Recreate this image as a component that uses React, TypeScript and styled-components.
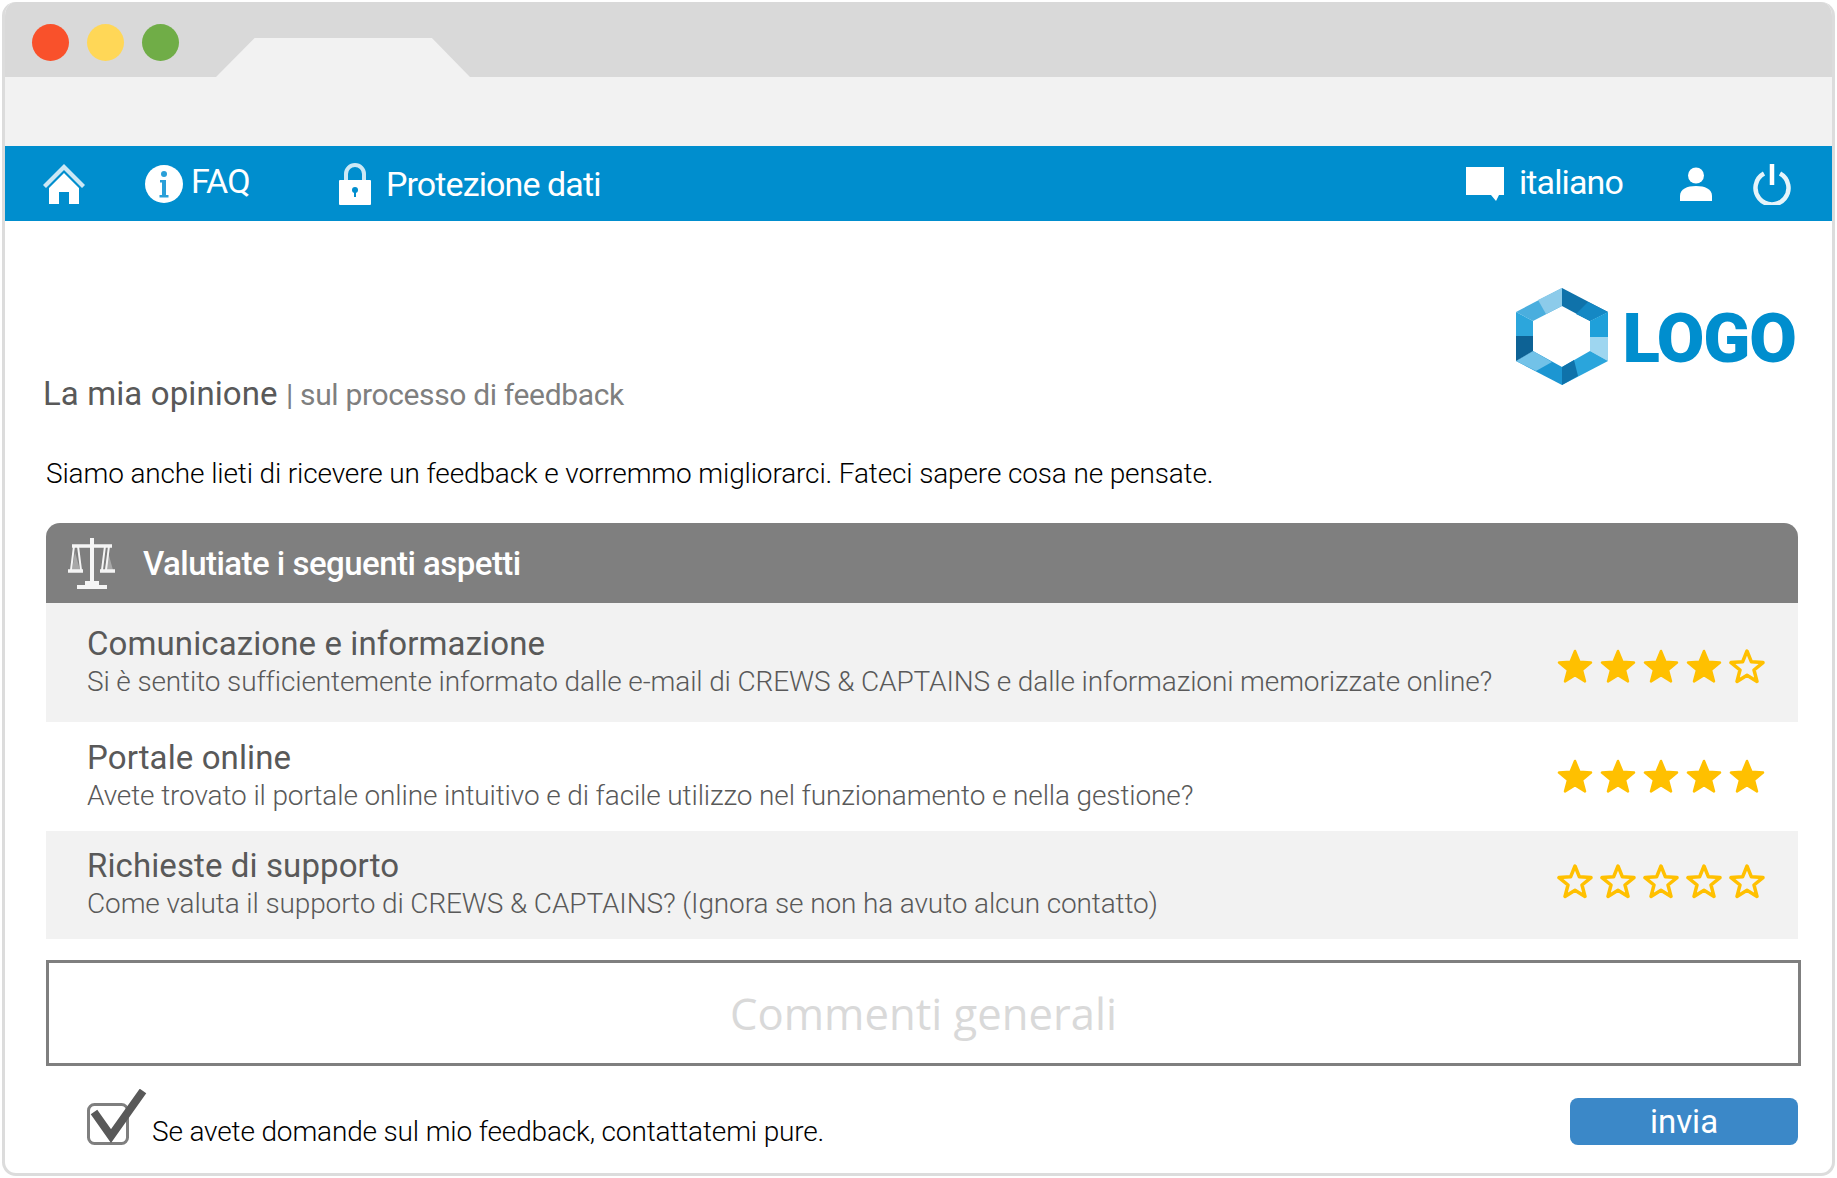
import React from "react";
import styled, { createGlobalStyle } from "styled-components";

const GlobalStyle = createGlobalStyle`
  html, body {
    margin: 0;
    padding: 0;
    background: #ffffff;
  }
  body {
    font-family: Roboto, "Liberation Sans", sans-serif;
    color: #000000;
  }
  * {
    box-sizing: border-box;
  }
`;

// WINDOW
const Page = styled.div`
  width: 1837px;
  height: 1178px;
  padding: 2px;
`;
const Window = styled.div`
  width: 1833px;
  height: 1174px;
  border: 3px solid #dcdcdc;
  border-top-width: 0;
  border-radius: 14px;
  overflow: hidden;
  display: flex;
  flex-direction: column;
  background: #ffffff;
`;
const TitleBar = styled.div`
  height: 75px;
  flex: none;
  background: #d9d9d9;
  display: flex;
  padding-top: 22px;
  padding-left: 27px;
  gap: 18px;
  position: relative;
`;
const Dot = styled.span<{ $color: string }>`
  width: 37px;
  height: 37px;
  border-radius: 50%;
  background: ${(p) => p.$color};
`;
const Tab = styled.div`
  position: absolute;
  left: 211px;
  bottom: 0;
  width: 254px;
  height: 39px;
  background: #f2f2f2;
  clip-path: polygon(15.2% 0, 85% 0, 100% 100%, 0 100%);
`;
const AddressBar = styled.div`
  height: 69px;
  flex: none;
  background: #f2f2f2;
`;

// NAV
const Nav = styled.nav`
  height: 75px;
  flex: none;
  background: #008ece;
  display: flex;
  align-items: center;
  color: #ffffff;
  padding-left: 38px;
  padding-right: 41px;
  svg {
    filter: blur(0.5px);
  }
`;
const NavItem = styled.div<{ $width?: number }>`
  display: flex;
  align-items: center;
  flex: none;
  width: ${(p) => (p.$width ? `${p.$width}px` : "auto")};
`;
const NavLabel = styled.span<{ $gap: number; $raise?: number }>`
  margin-left: ${(p) => p.$gap}px;
  margin-bottom: ${(p) => p.$raise ?? 0}px;
  font-size: 34px;
  letter-spacing: -0.9px;
  line-height: 40px;
`;
const NavSpacer = styled.div`
  flex: 1;
`;

// CONTENT
const Content = styled.main`
  flex: 1;
  padding: 0 34px 0 41px;
  display: flex;
  flex-direction: column;
  min-height: 0;
`;
const Brand = styled.div`
  display: flex;
  justify-content: space-between;
  align-items: flex-end;
  height: 214px;
  padding-right: 2px;
`;
const Heading = styled.h1`
  margin: 0 0 0 -3px;
  font-size: 33px;
  font-weight: 400;
  color: #595959;
  line-height: 40px;
  letter-spacing: 0.1px;
  padding-bottom: 20px;
`;
const HeadingNote = styled.span`
  font-size: 30px;
  color: #7f7f7f;
  letter-spacing: -0.35px;
`;
const Logo = styled.div`
  display: flex;
  align-items: center;
  gap: 14px;
  margin-bottom: 50px;
  svg {
    filter: blur(0.4px);
  }
`;
const LogoText = styled.span`
  font-family: Roboto, "Liberation Sans", sans-serif;
  font-size: 69px;
  font-weight: 900;
  line-height: 70px;
  margin-top: 4px;
  color: #008ece;
  letter-spacing: -1px;
`;
const Intro = styled.p`
  margin: 19px 0 29px;
  font-size: 28px;
  font-weight: 300;
  line-height: 40px;
  letter-spacing: -0.135px;
  color: #000000;
`;

// RATINGS
const Panel = styled.section`
  display: flex;
  flex-direction: column;
`;
const PanelHeader = styled.div`
  height: 80px;
  background: #7f7f7f;
  border-radius: 14px 14px 0 0;
  display: flex;
  align-items: center;
  padding-left: 22px;
  color: #ffffff;
  svg {
    filter: blur(0.5px);
  }
`;
const PanelTitle = styled.h2`
  margin: 0 0 0 28px;
  font-size: 33px;
  font-weight: 500;
  letter-spacing: -0.53px;
`;
const Row = styled.div<{ $shaded: boolean; $height: number }>`
  height: ${(p) => p.$height}px;
  background: ${(p) => (p.$shaded ? "#f2f2f2" : "#ffffff")};
  display: flex;
  align-items: center;
  justify-content: space-between;
  padding: 0 33px 0 41px;
`;
const RowText = styled.div`
  display: flex;
  flex-direction: column;
`;
const RowTitle = styled.h3`
  margin: 0;
  font-size: 33px;
  font-weight: 400;
  line-height: 38px;
  letter-spacing: 0.1px;
  color: #595959;
`;
const RowQuestion = styled.p`
  margin: 0;
  font-size: 28px;
  font-weight: 300;
  line-height: 38px;
  letter-spacing: -0.12px;
  color: #595959;
`;
const Stars = styled.div<{ $drop: number }>`
  display: flex;
  gap: 7px;
  margin-top: ${(p) => Math.max(p.$drop, 0)}px;
  margin-bottom: ${(p) => Math.max(-p.$drop, 0)}px;
`;

// FORM
const Comments = styled.div`
  height: 106px;
  margin-top: 21px;
  margin-right: -3px;
  border: 3px solid #7f7f7f;
  display: flex;
  align-items: center;
  justify-content: center;
  font-family: "Open Sans", "Noto Sans", sans-serif;
  font-size: 43.6px;
  color: #d9d9d9;
`;
const Footer = styled.div`
  display: flex;
  align-items: flex-start;
  justify-content: space-between;
  margin-top: 23px;
  padding-left: 41px;
`;
const Consent = styled.label`
  display: flex;
  align-items: flex-end;
  gap: 5px;
  font-size: 28px;
  font-weight: 300;
  line-height: 36px;
  letter-spacing: -0.15px;
  color: #000000;
  svg {
    margin-bottom: 5px;
    filter: blur(0.4px);
  }
`;
const SendButton = styled.button`
  width: 228px;
  height: 47px;
  margin-top: 9px;
  border: 0;
  border-radius: 8px;
  background: #3b88c8;
  color: #ffffff;
  font-family: Roboto, "Liberation Sans", sans-serif;
  font-size: 33px;
  padding: 0;
`;

const HomeIcon = () => (
  <svg width="42" height="40" viewBox="0 0 42 40" fill="#fff">
    <path d="M21 0 42 21 39 24 21 6 3 24 0 21Z" opacity="0.8" />
    <path d="M21 9 36 24V40H26V28H16V40H6V24Z" />
  </svg>
);

const InfoIcon = () => (
  <svg width="38" height="38" viewBox="0 0 38 38">
    <circle cx="19" cy="19" r="19" fill="#fff" />
    <path d="M15 15h6v15h2.5v2.5h-9V30H17V17.5h-2Z" fill="#2a9fd8" />
    <circle cx="19" cy="9" r="3" fill="#2a9fd8" />
  </svg>
);

const LockIcon = () => (
  <svg width="32" height="42" viewBox="0 0 32 42">
    <path d="M7 18V11a9 9 0 0 1 18 0v7" fill="none" stroke="#fff" strokeWidth="4" opacity="0.8" />
    <rect y="17" width="32" height="25" rx="1" fill="#fff" />
    <circle cx="16" cy="27" r="3" fill="#008ece" />
    <rect x="15" y="27" width="2" height="7" fill="#008ece" />
  </svg>
);

const ChatIcon = () => (
  <svg width="38" height="35" viewBox="0 0 38 35" fill="#fff">
    <path d="M0 1h38v28H33l-3 6-5-6H0Z" />
  </svg>
);

const UserIcon = () => (
  <svg width="32" height="34" viewBox="0 0 32 34" fill="#fff">
    <circle cx="16" cy="8.5" r="8" />
    <path d="M0 34v-5c0-7 7-10 16-10s16 3 16 10v5Z" />
  </svg>
);

const PowerIcon = () => (
  <svg width="38" height="42" viewBox="0 0 38 42" fill="none" stroke="#fff" strokeWidth="4.5">
    <path d="M11 10.5a16.5 16.5 0 1 0 16 0" opacity="0.9" />
    <path d="M19 1v21" />
  </svg>
);

const LogoMark = () => (
  <svg width="92" height="97" viewBox="0 0 92 97">
    <polygon points="46,0 46,18 17,33 0,24" fill="#4aaede" />
    <polygon points="22,12 46,0 46,18 30,26" fill="#8ccbea" />
    <polygon points="46,0 92,24 74,33 46,18" fill="#0f72aa" />
    <polygon points="72,14 92,24 74,33 60,26" fill="#1488c4" />
    <polygon points="92,24 92,49 74,49 74,33" fill="#1fa0da" />
    <polygon points="92,49 92,73 74,63 74,49" fill="#9ed6f0" />
    <polygon points="92,73 46,97 46,79 74,63" fill="#2aa5dc" />
    <polygon points="62,88 46,97 46,79 58,72" fill="#0f72aa" />
    <polygon points="46,97 0,73 17,63 46,79" fill="#1c96d2" />
    <polygon points="0,73 17,63 36,74 20,83" fill="#72c2e8" />
    <polygon points="0,73 0,48 17,48 17,63" fill="#0d6295" />
    <polygon points="0,48 0,24 17,33 17,48" fill="#2ca6dc" />
  </svg>
);

const ScalesIcon = () => (
  <svg width="47" height="51" viewBox="0 0 47 51" fill="none" stroke="#f5f5f5">
    <path d="M24 0v47" strokeWidth="4" />
    <path d="M4 8h40" strokeWidth="3.5" />
    <path d="M9 49h30" strokeWidth="4" />
    <path d="M17 47h14v-4h-14Z" fill="#f5f5f5" strokeWidth="0" />
    <path d="M6 8 3 32M10 8l3 24M41 8l-3 24M37 8l-3 24" strokeWidth="2" />
    <path d="M7 14 4 32h8ZM40 14 37 32h8Z" fill="#f5f5f5" fillOpacity="0.35" strokeWidth="0" />
    <path d="M0 33h15M32 33h15" strokeWidth="3.5" />
  </svg>
);

const StarIcon = ({ filled }: { filled: boolean }) => (
  <svg width="36" height="35" viewBox="0 0 36 35">
    <polygon
      points="18,2 22.4,12.8 34,13.6 25,21 28,32.4 18,26.2 8,32.4 11,21 2,13.6 13.6,12.8"
      fill={filled ? "#ffc000" : "none"}
      stroke="#ffc000"
      strokeWidth={filled ? 2.5 : 3.5}
      strokeLinejoin="round"
    />
  </svg>
);

const CheckIcon = () => (
  <svg width="60" height="56" viewBox="0 0 60 56" fill="none">
    <rect x="1.5" y="15.5" width="39" height="39" rx="6" stroke="#7f7f7f" strokeWidth="3" />
    <path d="M7 23 24 47 56 2" stroke="#595959" strokeWidth="8" />
  </svg>
);

const ratings = [
  {
    title: "Comunicazione e informazione",
    question:
      "Si è sentito sufficientemente informato dalle e-mail di CREWS & CAPTAINS e dalle informazioni memorizzate online?",
    stars: 4,
    height: 119,
    drop: 7,
  },
  {
    title: "Portale online",
    question:
      "Avete trovato il portale online intuitivo e di facile utilizzo nel funzionamento e nella gestione?",
    stars: 5,
    height: 109,
    drop: 0,
  },
  {
    title: "Richieste di supporto",
    question:
      "Come valuta il supporto di CREWS & CAPTAINS? (Ignora se non ha avuto alcun contatto)",
    stars: 0,
    height: 108,
    drop: -7,
  },
];

export default function App() {
  return (
    <Page>
      <GlobalStyle />
      <Window>
        <TitleBar>
          <Dot $color="#f9512b" />
          <Dot $color="#ffd757" />
          <Dot $color="#70ad47" />
          <Tab />
        </TitleBar>
        <AddressBar />
        <Nav>
          <NavItem $width={102}>
            <HomeIcon />
          </NavItem>
          <NavItem $width={194}>
            <InfoIcon />
            <NavLabel $gap={8} $raise={6}>FAQ</NavLabel>
          </NavItem>
          <NavItem>
            <LockIcon />
            <NavLabel $gap={15}>Protezione dati</NavLabel>
          </NavItem>
          <NavSpacer />
          <NavItem $width={214}>
            <ChatIcon />
            <NavLabel $gap={15} $raise={4}>italiano</NavLabel>
          </NavItem>
          <NavItem $width={73}>
            <UserIcon />
          </NavItem>
          <NavItem>
            <PowerIcon />
          </NavItem>
        </Nav>
        <Content>
          <Brand>
            <Heading>
              La mia opinione <HeadingNote>| sul processo di feedback</HeadingNote>
            </Heading>
            <Logo>
              <LogoMark />
              <LogoText>LOGO</LogoText>
            </Logo>
          </Brand>
          <Intro>
            Siamo anche lieti di ricevere un feedback e vorremmo migliorarci. Fateci sapere cosa ne pensate.
          </Intro>
          <Panel>
            <PanelHeader>
              <ScalesIcon />
              <PanelTitle>Valutiate i seguenti aspetti</PanelTitle>
            </PanelHeader>
            {ratings.map((r, i) => (
              <Row key={r.title} $shaded={i % 2 === 0} $height={r.height}>
                <RowText>
                  <RowTitle>{r.title}</RowTitle>
                  <RowQuestion>{r.question}</RowQuestion>
                </RowText>
                <Stars $drop={r.drop}>
                  {[0, 1, 2, 3, 4].map((n) => (
                    <StarIcon key={n} filled={n < r.stars} />
                  ))}
                </Stars>
              </Row>
            ))}
          </Panel>
          <Comments>Commenti generali</Comments>
          <Footer>
            <Consent>
              <CheckIcon />
              Se avete domande sul mio feedback, contattatemi pure.
            </Consent>
            <SendButton>invia</SendButton>
          </Footer>
        </Content>
      </Window>
    </Page>
  );
}
